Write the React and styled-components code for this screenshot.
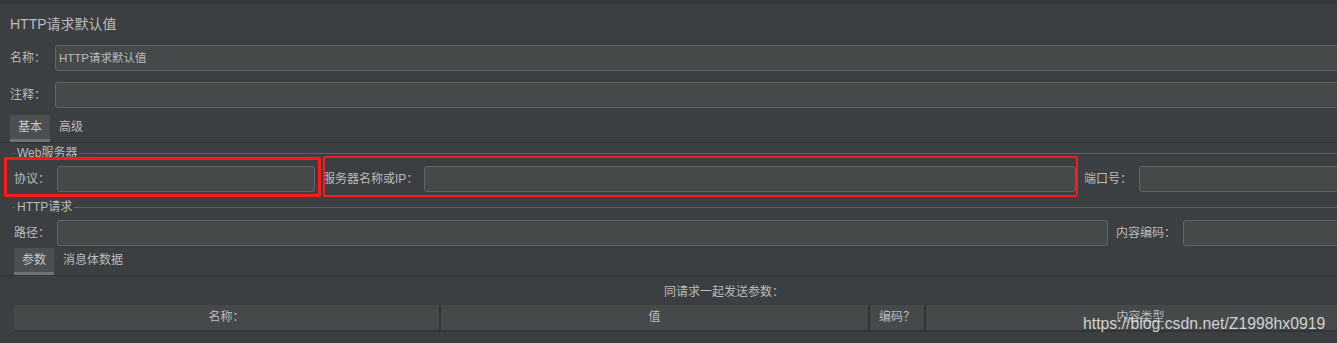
import React from "react";
import styled, { createGlobalStyle } from "styled-components";

const GlobalStyle = createGlobalStyle`
  html, body { margin: 0; padding: 0; background: #3c3f41; overflow: hidden; }
  body { font-family: "Liberation Sans", "Noto Sans CJK SC", sans-serif; }
`;

const Page = styled.div`
  position: relative;
  width: 1440px;
  height: 343px;
  background: #3c3f41;
  color: #bbbbbb;
  font-size: 12px;
  border-top: 2px solid #37393b;
  box-sizing: border-box;
`;

const TopLine = styled.div`
  height: 1px;
  background: #313335;
`;

const Title = styled.div`
  padding: 12px 10px 0;
  font-size: 14px;
  line-height: 18px;
  color: #bbbbbb;
`;

const Row = styled.div`
  display: flex;
  align-items: center;
  height: 26px;
  margin-top: ${(p) => p.$mt || 0}px;
  padding-left: ${(p) => p.$pl || 0}px;
`;

const Label = styled.span`
  box-sizing: border-box;
  flex: 0 0 ${(p) => p.$w}px;
  margin-left: ${(p) => p.$ml || 0}px;
  line-height: 16px;
  white-space: nowrap;
  color: #bbbbbb;
`;

const Input = styled.div`
  box-sizing: border-box;
  height: 26px;
  ${(p) => (p.$w ? `flex: 0 0 ${p.$w}px;` : "flex: 1;")}
  margin-right: ${(p) => p.$mr || 0}px;
  background: #45494a;
  border: 1px solid #646464;
  border-radius: 3px;
  padding: 0 3px;
  font-size: 11.5px;
  line-height: 24px;
  color: #bbbbbb;
  white-space: nowrap;
`;

const Group = styled.div`
  position: relative;
  display: flex;
  align-items: center;
  height: 26px;
  padding-left: ${(p) => p.$pl || 0}px;
  margin-right: ${(p) => p.$mr || 0}px;
`;

const RedMark = styled.div`
  position: absolute;
  pointer-events: none;
  border: ${(p) => p.$t}px solid #ff1a1a;
  border-radius: 2px;
  left: ${(p) => p.$l}px;
  right: ${(p) => p.$r}px;
  top: ${(p) => p.$top}px;
  bottom: ${(p) => p.$b}px;
`;

const TabBar = styled.div`
  display: flex;
  margin-top: ${(p) => p.$mt}px;
  padding-left: ${(p) => p.$pl}px;
  border-bottom: 1px solid #323232;
`;

const Tab = styled.div`
  box-sizing: border-box;
  height: 27px;
  padding: 0 ${(p) => (p.$active ? 8 : 9)}px;
  line-height: 25px;
  font-size: 12px;
  color: ${(p) => (p.$active ? "#c8c8c8" : "#bbbbbb")};
  background: ${(p) => (p.$active ? "#4b4f51" : "transparent")};
  border-bottom: 3px solid ${(p) => (p.$active ? "#6e7275" : "transparent")};
`;

const SectionHead = styled.div`
  display: flex;
  align-items: center;
  height: 18px;
  margin-top: ${(p) => p.$mt}px;
  padding-left: 12px;
`;

const Tick = styled.div`
  width: 3px;
  height: 1px;
  background: #5e6163;
`;

const Legend = styled.span`
  padding: 0 2px;
  line-height: 16px;
  color: #bbbbbb;
`;

const HeadLine = styled.div`
  flex: 1;
  height: 1px;
  background: #5e6163;
`;

const Caption = styled.div`
  margin-top: 8px;
  height: 16px;
  line-height: 16px;
  padding-left: 664px;
  color: #bbbbbb;
`;

const Table = styled.div`
  display: grid;
  grid-template-columns: 427px 429px 56px 429px;
  margin: 5px 0 0 14px;
  width: 1341px;
  border-bottom: 2px solid #323436;
`;

const HeadCell = styled.div`
  height: 25px;
  line-height: 25px;
  text-align: center;
  background: #45494a;
  color: #bbbbbb;
  border-right: ${(p) => (p.$last ? 0 : 2)}px solid #323436;
`;

const Watermark = styled.div`
  position: absolute;
  left: 1083px;
  top: 312px;
  font-family: "Liberation Sans", sans-serif;
  font-size: 15.8px;
  line-height: 20px;
  color: rgba(235, 235, 235, 0.85);
  white-space: nowrap;
`;

export default function App() {
  return (
    <>
      <GlobalStyle />
      <Page>
        <TopLine />
        <Title>HTTP请求默认值</Title>

        <Row $mt={12} $pl={10}>
          <Label $w={45}>名称：</Label>
          <Input $mr={10}>HTTP请求默认值</Input>
        </Row>
        <Row $mt={11} $pl={10}>
          <Label $w={45}>注释：</Label>
          <Input $mr={10} />
        </Row>

        <TabBar $mt={7} $pl={10}>
          <Tab $active>基本</Tab>
          <Tab>高级</Tab>
        </TabBar>

        <SectionHead $mt={1}>
          <Tick />
          <Legend>Web服务器</Legend>
          <HeadLine />
        </SectionHead>

        <Row $mt={4}>
          <Group $pl={14} $mr={8}>
            <Label $w={43}>协议：</Label>
            <Input $w={258} />
            <RedMark $t={3} $l={4} $r={-6} $top={-9} $b={-5} />
          </Group>
          <Group $mr={8}>
            <Label $w={101}>服务器名称或IP：</Label>
            <Input $w={652} />
            <RedMark $t={2} $l={0} $r={-2} $top={-10} $b={-5} />
          </Group>
          <Label $w={55}>端口号：</Label>
          <Input $mr={10} />
        </Row>

        <SectionHead $mt={6}>
          <Tick />
          <Legend>HTTP请求</Legend>
          <HeadLine />
        </SectionHead>

        <Row $mt={4} $pl={14}>
          <Label $w={43}>路径：</Label>
          <Input $w={1051} />
          <Label $w={67} $ml={8}>内容编码：</Label>
          <Input $mr={10} />
        </Row>

        <TabBar $mt={2} $pl={14}>
          <Tab $active>参数</Tab>
          <Tab>消息体数据</Tab>
        </TabBar>

        <Caption>同请求一起发送参数：</Caption>

        <Table>
          <HeadCell>名称：</HeadCell>
          <HeadCell>值</HeadCell>
          <HeadCell>编码？</HeadCell>
          <HeadCell $last>内容类型</HeadCell>
        </Table>

        <Watermark>https://blog.csdn.net/Z1998hx0919</Watermark>
      </Page>
    </>
  );
}
